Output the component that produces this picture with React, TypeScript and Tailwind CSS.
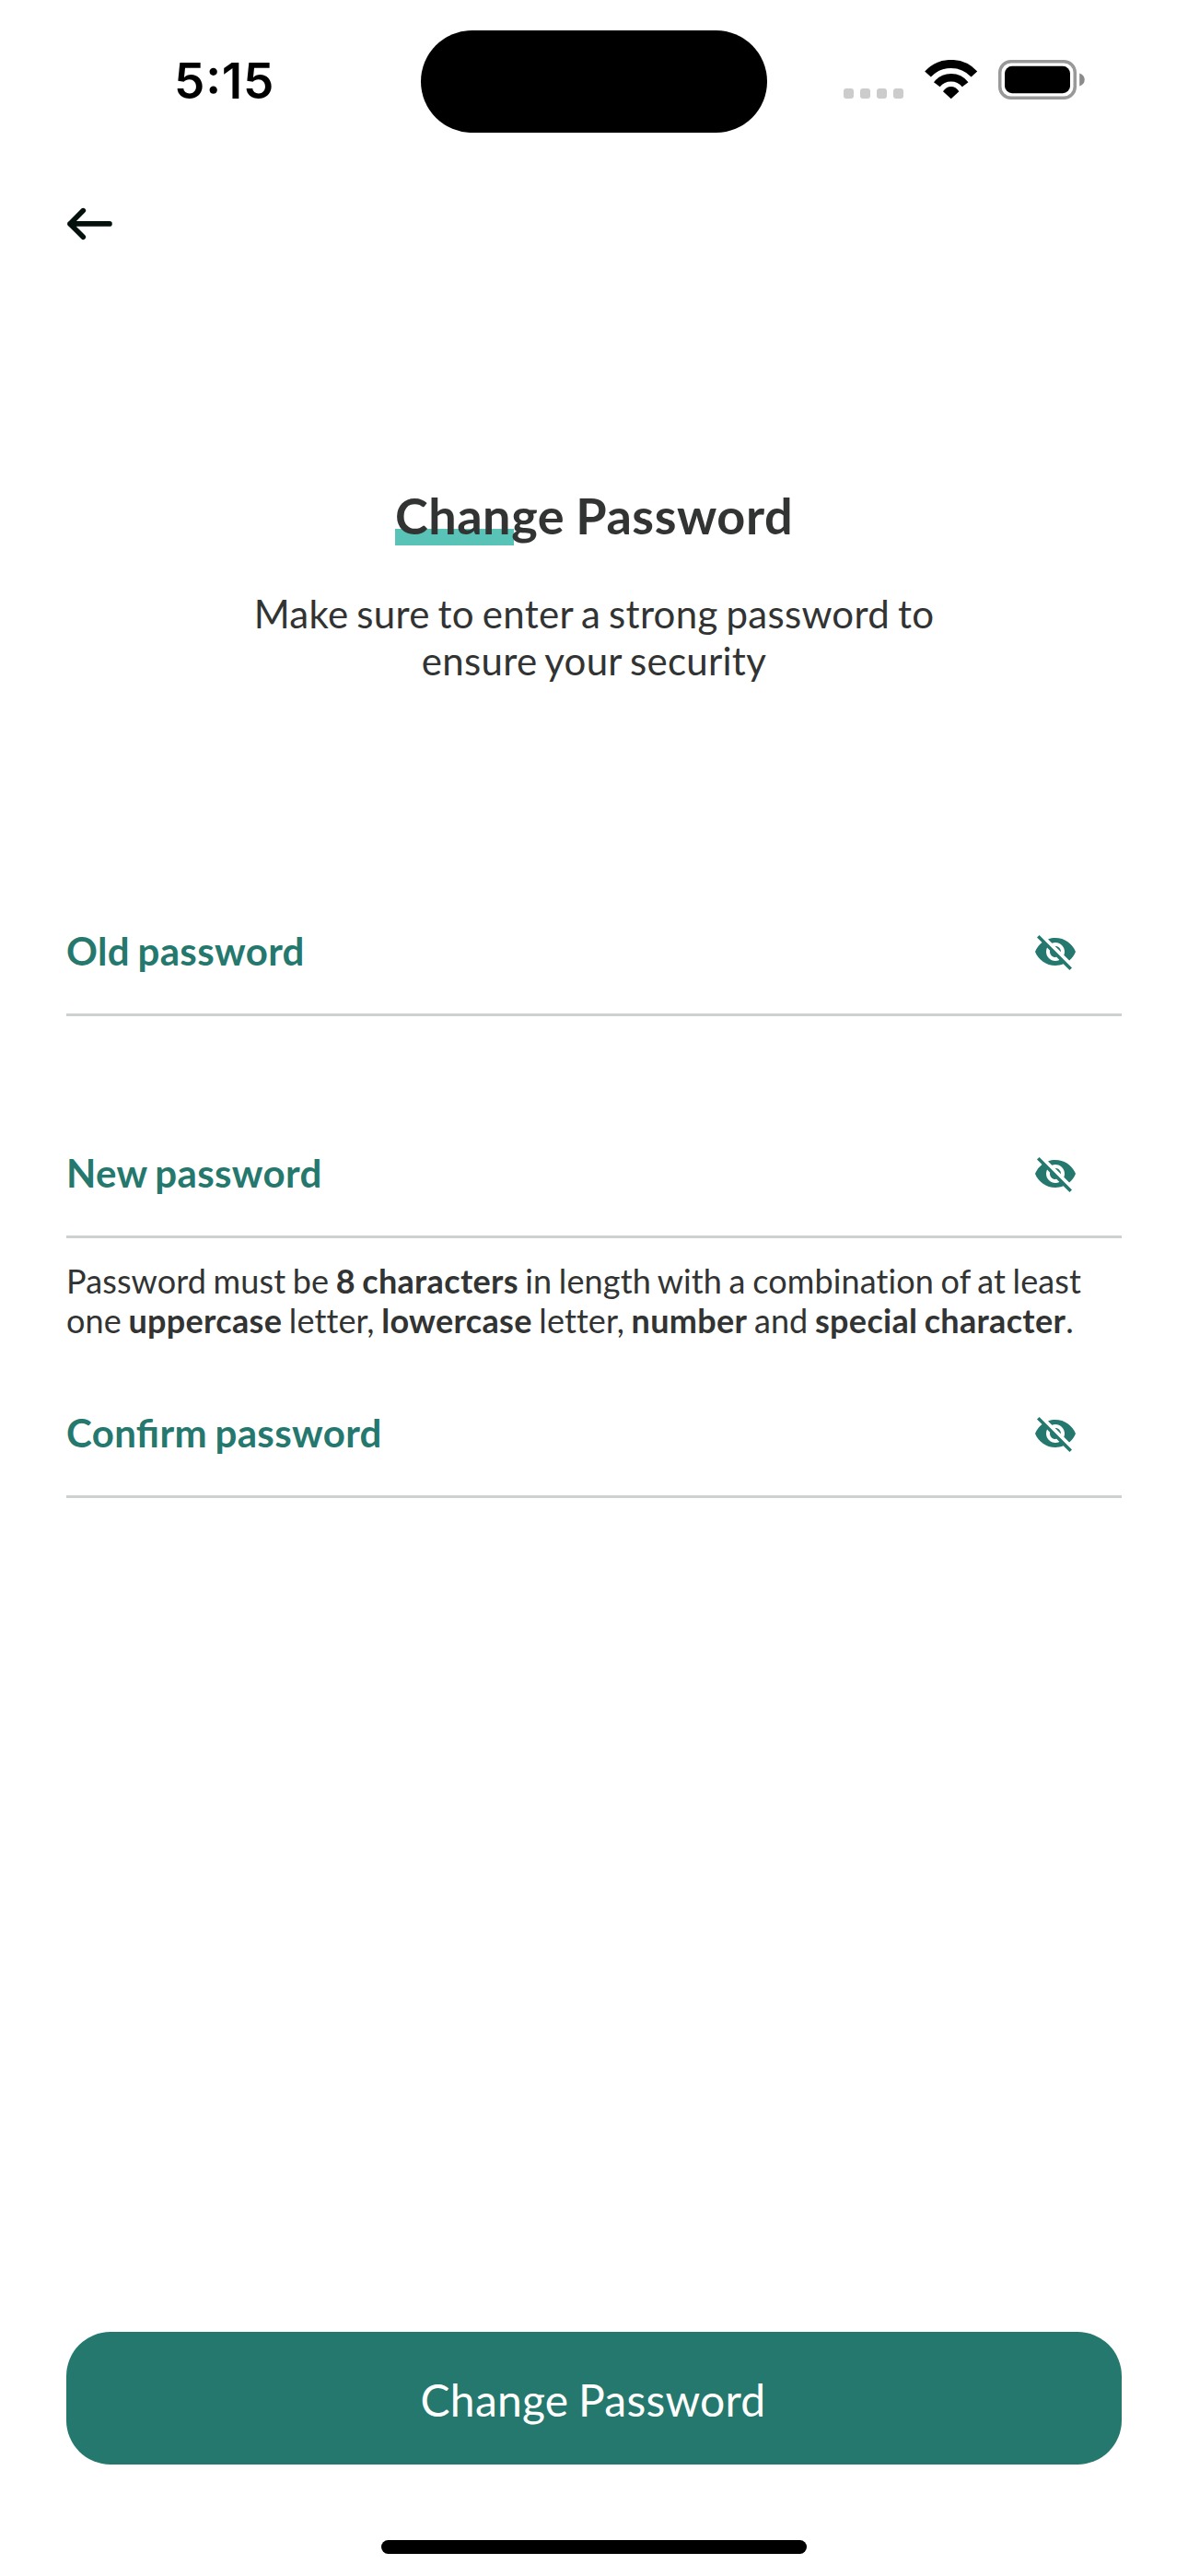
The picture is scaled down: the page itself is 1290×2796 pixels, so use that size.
import React from "react";
import { MdVisibilityOff } from "react-icons/md";

function StatusBar() {
  return (
    <header className="grid h-[177px] grid-cols-[457px_376px_457px] text-black">
      <div className="flex h-[177px] items-center pb-[1px] pl-[189px] text-[53px] font-semibold leading-none font-['Inter',sans-serif]">
        <time className="tracking-[0.8px] [font-feature-settings:'case'_1]">5:15</time>
      </div>
      <div className="mt-[33px] h-[111px] rounded-full bg-black" />
      <div className="flex h-[177px] pl-[83px]">
        <div className="mt-[96px] flex gap-[7px]">
          {[0, 1, 2, 3].map((dot) => (
            <span key={dot} className="h-[11px] w-[11px] rounded-[3px] bg-[#cccccc]" />
          ))}
        </div>
        <svg className="mt-[65px] ml-[23px] h-[43px] w-[58px]" viewBox="0 0 58 43" fill="none" stroke="currentColor">
          <path d="M3.5 15.5a34.2 34.2 0 0 1 50.4 0" strokeWidth="9" />
          <path d="M13.3 26.8a19.4 19.4 0 0 1 30.8 0" strokeWidth="8.4" />
          <path d="M28.7 42.2L20 34.2Q23.5 29 28.7 29T37.4 34.2z" fill="currentColor" stroke="none" />
        </svg>
        <svg className="mt-[65px] ml-[22px] h-[43px] w-[95px]" viewBox="0 0 95 43" fill="none">
          <rect x="1.75" y="1.75" width="81.5" height="39.5" rx="12" stroke="#999999" strokeWidth="3.5" />
          <rect x="7" y="6.8" width="71" height="29.4" rx="8" fill="black" />
          <path d="M88.2 14.5q5.5 2 5.5 7t-5.5 7z" fill="#8a8a8a" />
        </svg>
      </div>
    </header>
  );
}

function PasswordField({ label, spacing }: { label: string; spacing: string }) {
  return (
    <div className={`flex h-[136px] items-center justify-between border-b-[3px] border-[#cdd1cf] pr-[48px] pb-[1px] ${spacing}`}>
      <span className="pb-[2px] text-[42px] font-bold leading-[50px] tracking-[0.35px] text-[#24786d] [font-feature-settings:'liga'_1] [word-spacing:-2px]">
        {label}
      </span>
      <MdVisibilityOff className="h-[48px] w-[48px] text-[#24786d]" />
    </div>
  );
}

function Strong({ children }: { children: React.ReactNode }) {
  return <b className="tracking-[0.32px]">{children}</b>;
}

export default function App() {
  return (
    <div className="flex h-[2796px] w-[1290px] flex-col bg-white font-['Lato',sans-serif] text-[#323333]">
      <StatusBar />
      <main className="flex flex-1 flex-col px-[72px]">
        <svg className="mt-[48px] h-[36px] w-[51px]" viewBox="0 0 51 36" fill="none" stroke="#04110d" strokeWidth="5.6" strokeLinecap="round" strokeLinejoin="round">
          <path d="M18.3 3.6L4 17.9l14.3 14.3M4 17.9h43" />
        </svg>
        <h1 className="mt-[266px] self-center bg-[linear-gradient(#58c3b6,#58c3b6)] bg-[length:129px_18px] bg-[position:0_47px] bg-no-repeat text-[54px] font-bold leading-[65px] tracking-[0.55px] [word-spacing:-1.5px]">
          Change Password
        </h1>
        <p className="mt-[49px] text-center text-[42px] leading-[51px] tracking-[0.28px] [word-spacing:-2.1px]">
          Make sure to enter a strong password to
          <br />
          ensure your security
        </p>
        <PasswordField label="Old password" spacing="mt-[224px]" />
        <PasswordField label="New password" spacing="mt-[105px]" />
        <p className="mt-[25px] whitespace-nowrap text-[36px] leading-[43px] tracking-[0.12px] [word-spacing:-1.8px]">
          Password must be <Strong>8 characters</Strong> in length with a combination of at least
          <br />
          one <Strong>uppercase</Strong> letter, <Strong>lowercase</Strong> letter, <Strong>number</Strong> and{" "}
          <Strong>special character</Strong>.
        </p>
        <PasswordField label="Confirm password" spacing="mt-[35px]" />
        <button className="mt-auto mb-[121px] h-[144px] w-full rounded-[48px] bg-[#24786d] pt-[3px] pr-[2px] text-[48px] tracking-[0.25px] text-white [word-spacing:-2px]">
          Change Password
        </button>
      </main>
      <div className="mx-auto mb-[24px] -mt-[39px] h-[15px] w-[462px] rounded-full bg-black" />
    </div>
  );
}
